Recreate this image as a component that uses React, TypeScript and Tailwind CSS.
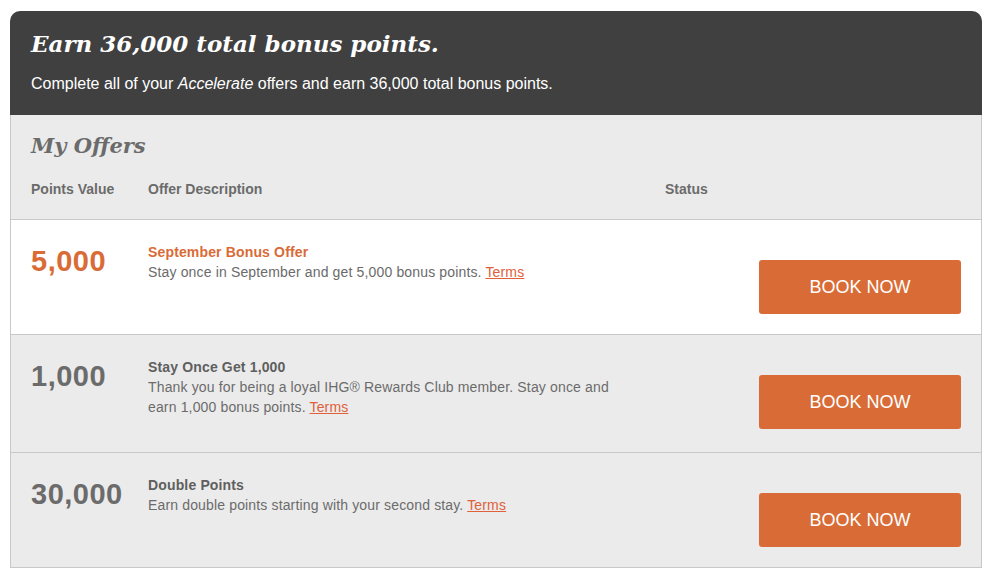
import React from "react";

type Offer = {
  points: string;
  title: string;
  desc: string;
  active?: boolean;
};

const offers: Offer[] = [
  {
    points: "5,000",
    title: "September Bonus Offer",
    desc: "Stay once in September and get 5,000 bonus points.",
    active: true,
  },
  {
    points: "1,000",
    title: "Stay Once Get 1,000",
    desc: "Thank you for being a loyal IHG® Rewards Club member. Stay once and earn 1,000 bonus points.",
  },
  {
    points: "30,000",
    title: "Double Points",
    desc: "Earn double points starting with your second stay.",
  },
];

const serif = "font-['Georgia','DejaVu_Serif',serif]";

function OfferRow({ offer }: { offer: Offer }) {
  return (
    <div
      className={`flex border-t border-[#c8c8c8] pl-[20px] pr-[20px] ${
        offer.active ? "bg-white" : "bg-[#ebebeb]"
      }`}
    >
      {/* Points */}
      <div className="w-[117px] shrink-0 pt-[23px]">
        <span
          className={`text-[29px] font-bold leading-[36px] tracking-[0.5px] ${
            offer.active ? "text-[#d96b36]" : "text-[#6b6b6b]"
          }`}
        >
          {offer.points}
        </span>
      </div>

      {/* Description */}
      <div className="w-[517px] shrink-0 pr-[40px] pt-[22px] pb-[35px]">
        <div
          className={`text-[14px] font-bold leading-[20px] tracking-[0.15px] ${
            offer.active ? "text-[#d96b36]" : "text-[#5f5f5f]"
          }`}
        >
          {offer.title}
        </div>
        <p className="text-[14px] leading-[20px] tracking-[0.15px] text-[#6b6b6b]">
          {offer.desc}{" "}
          <a href="#" className="text-[#e0603a] underline">
            Terms
          </a>
        </p>
      </div>

      {/* Status / action */}
      <div className="flex flex-1 justify-end pt-[40px] pb-[20px]">
        <button className="h-[54px] w-[202px] rounded-[3px] bg-[#d96c36] text-[18px] text-white">
          BOOK NOW
        </button>
      </div>
    </div>
  );
}

export default function App() {
  return (
    <div className="min-h-[577px] bg-white pt-[11px] font-['Arial','Liberation_Sans',sans-serif]">
      <div className="ml-[10px] w-[972px]">
        {/* Banner */}
        <header className="rounded-t-[10px] bg-[#404040] pl-[21px] pt-[17px] pb-[21px]">
          <h1 className={`${serif} text-[23px] font-bold italic leading-[32px] text-white`}>
            Earn 36,000 total bonus points.
          </h1>
          <p className="mt-[14px] text-[16px] leading-[20px] text-white">
            Complete all of your <em>Accelerate</em> offers and earn 36,000 total bonus points.
          </p>
        </header>

        <div className="border-x border-b border-[#c8c8c8]">
          {/* My offers heading */}
          <div className="bg-[#ebebeb] pl-[20px] pt-[16px] pb-[20px]">
            <h2 className={`${serif} text-[21px] font-bold italic leading-[30px] text-[#6b6b6b]`}>
              My Offers
            </h2>
            <div className="mt-[18px] flex text-[14px] font-bold leading-[20px] text-[#6b6b6b]">
              <span className="w-[117px]">Points Value</span>
              <span className="w-[517px]">Offer Description</span>
              <span>Status</span>
            </div>
          </div>

          {offers.map((o) => (
            <OfferRow key={o.title} offer={o} />
          ))}
        </div>
      </div>
    </div>
  );
}
